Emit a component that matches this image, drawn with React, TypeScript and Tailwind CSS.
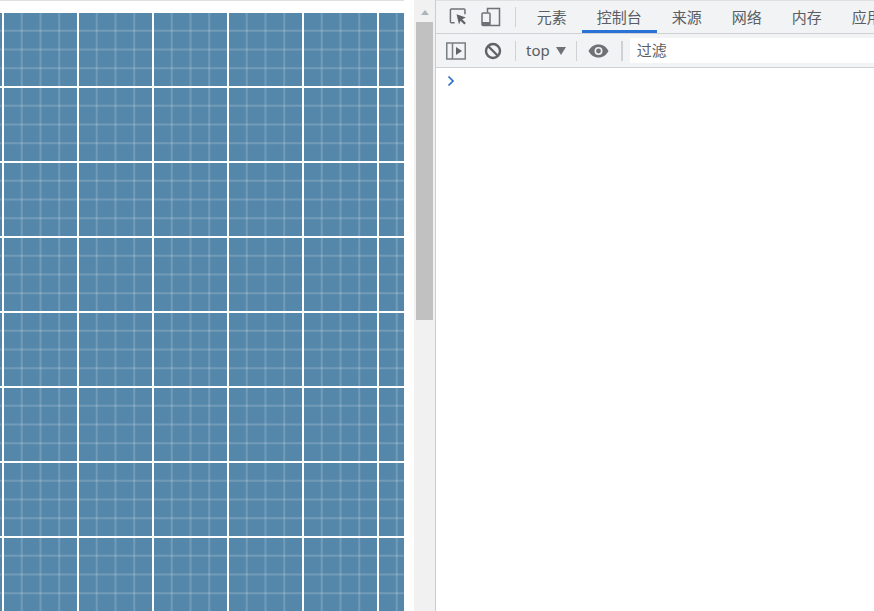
const tabs = ["元素", "控制台", "来源", "网络", "内存", "应用"];

function InspectIcon() {
  return (
    <svg width="20" height="20" viewBox="0 0 20 20" fill="none">
      <path d="M6 16H2.500a1 1 0 0 1-1-1V2.500a1 1 0 0 1 1-1H16a1 1 0 0 1 1 1V7" stroke="#6e7175" strokeWidth="1.600" />
      <path d="M8 7l10 3.600-4 1.700 4 4-1.700 1.700-4-4-1.600 4z" fill="#5f6368" />
    </svg>
  );
}

function DeviceIcon() {
  return (
    <svg width="20" height="20" viewBox="0 0 20 20" fill="none">
      <path d="M6.500 5.500V1.500H18.500V18.500H9" stroke="#6e7175" strokeWidth="1.500" />
      <rect x="1" y="6" width="8" height="12.500" rx="1" stroke="#6e7175" strokeWidth="1.500" />
      <rect x="1" y="15" width="8" height="3.500" fill="#6e7175" />
    </svg>
  );
}

function SidebarIcon() {
  return (
    <svg width="20" height="18" viewBox="0 0 20 18" fill="none">
      <rect x="0.750" y="1" width="18.500" height="16" stroke="#7a7d81" strokeWidth="1.500" />
      <path d="M6.500 1v16" stroke="#7a7d81" strokeWidth="1.500" />
      <path d="M10 5l6 4-6 4z" fill="#5f6368" />
    </svg>
  );
}

function BlockIcon() {
  return (
    <svg width="18" height="18" viewBox="0 0 18 18" fill="none">
      <circle cx="9" cy="9" r="7" stroke="#5f6368" strokeWidth="2.400" />
      <path d="M4 4l10 10" stroke="#5f6368" strokeWidth="2.400" />
    </svg>
  );
}

function EyeIcon() {
  return (
    <svg width="21" height="14" viewBox="0 0 20 14">
      <path
        fillRule="evenodd"
        d="M10 0.500C5.500 0.500 1.800 3.200 0 7c1.800 3.800 5.500 6.500 10 6.500S18.200 10.800 20 7C18.200 3.200 14.500 0.500 10 0.500zM10 11a4 4 0 1 1 0-8 4 4 0 0 1 0 8zM10 4.600a2.400 2.400 0 1 0 0 4.800 2.400 2.400 0 0 0 0-4.800z"
        fill="#6e7175"
      />
    </svg>
  );
}

export default function App() {
  return (
    <div className="flex h-[611px] w-[874px] overflow-hidden bg-white font-['Noto_Sans','Noto_Sans_CJK_SC',sans-serif]">
      {/* page under inspection */}
      <div className="w-[414px] shrink-0 pr-[10px]">
        <div className="h-[13px] border-t border-[#e0e0e0]" />
        <div className="h-[598px] bg-[#5587aa] bg-[linear-gradient(#fff_2px,transparent_2px),linear-gradient(90deg,#fff_2px,transparent_2px),linear-gradient(rgba(255,255,255,.17)_2px,transparent_2px),linear-gradient(90deg,rgba(255,255,255,.17)_2px,transparent_2px)] bg-size-[75px_75px,75px_75px,18.75px_18.75px,18.75px_18.75px] bg-position-[0_73px,2px_0,0_-2px,2px_0]" />
      </div>

      {/* scrollbar */}
      <div className="flex w-[22px] shrink-0 flex-col items-center border-r border-[#cccccc] bg-[#f1f1f1]">
        <div className="mt-[10px] h-0 w-0 border-x-[4px] border-b-[5px] border-x-transparent border-b-[#a9b4bb]" />
        <div className="mt-[7px] h-[298px] w-[17px] bg-[#c1c1c1]" />
      </div>

      {/* devtools */}
      <div className="min-w-0 flex-1">
        <div className="flex h-[34px] items-center border-y border-[#cfd1d4] border-t-[#e0e0e0] bg-[#f1f3f4] pl-[13px]">
          <InspectIcon />
          <div className="ml-[13px]">
            <DeviceIcon />
          </div>
          <div className="ml-[14px] h-[20px] w-px bg-[#cfd1d4]" />
          <div className="ml-[6px] flex h-full">
            {tabs.map((tab, i) => (
              <div
                key={tab}
                className={
                  i === 1
                    ? "flex shrink-0 items-center border-b-[3px] border-[#2a73d6] px-[15px] pt-[3px] text-[15px] text-[#5a5d61]"
                    : "flex shrink-0 items-center px-[15px] text-[15px] text-[#5a5d61]"
                }
              >
                {tab}
              </div>
            ))}
          </div>
        </div>
        <div className="flex h-[34px] items-center border-b border-[#cfd1d4] bg-[#f1f3f4] pl-[10px]">
          <SidebarIcon />
          <div className="ml-[18px]">
            <BlockIcon />
          </div>
          <div className="ml-[13px] h-[20px] w-px bg-[#cfd1d4]" />
          <span className="ml-[10px] text-[15px] text-[#5a5d61]">top</span>
          <div className="ml-[6px] h-0 w-0 border-x-[5px] border-t-[8px] border-x-transparent border-t-[#6e7175]" />
          <div className="ml-[10px] h-[20px] w-px bg-[#cfd1d4]" />
          <div className="ml-[11px]">
            <EyeIcon />
          </div>
          <div className="ml-[12px] h-[20px] w-[2px] bg-[#cfd1d4]" />
          <div className="ml-[7px] flex h-[25px] flex-1 items-center bg-white pl-[7px] text-[15px] text-[#5a5d61]">
            过滤
          </div>
        </div>
        <div className="pl-[11px] pt-[7px]">
          <svg width="8" height="12" viewBox="0 0 8 12" fill="none">
            <path d="M1.500 1.500L6 6l-4.500 4.500" stroke="#2a6fc9" strokeWidth="1.700" />
          </svg>
        </div>
      </div>
    </div>
  );
}
